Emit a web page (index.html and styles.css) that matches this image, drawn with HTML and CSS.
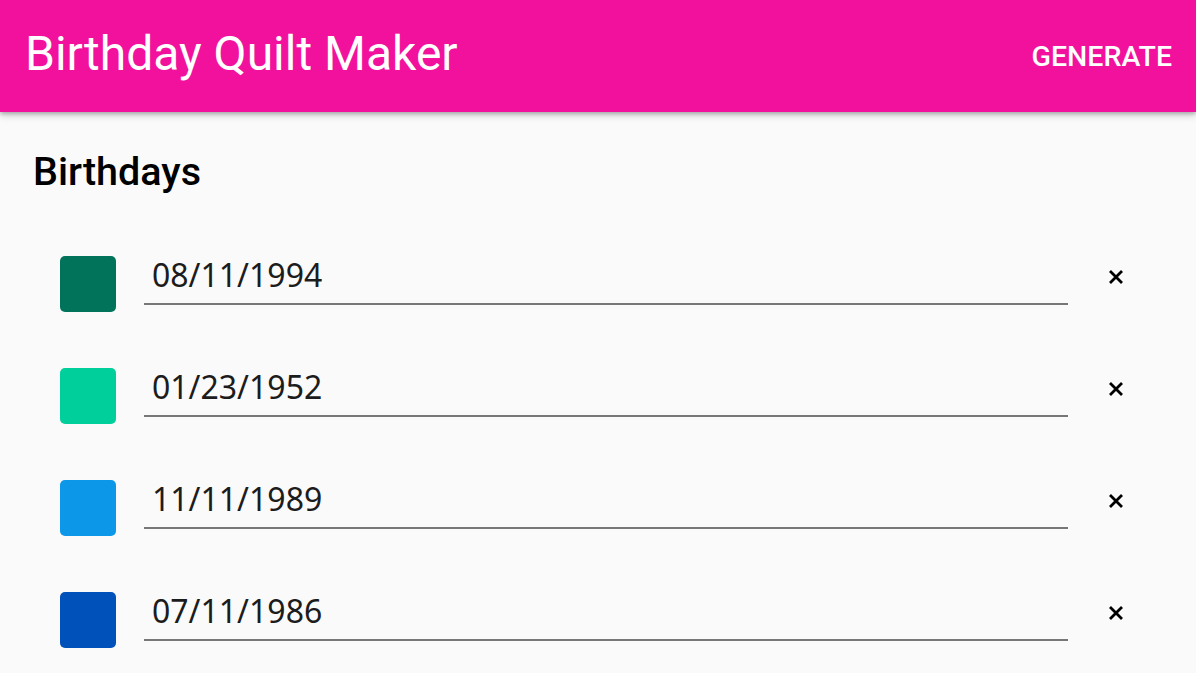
FILE: index.html
```html
<!DOCTYPE html>
<html>
<head>
<meta charset="utf-8">
<link rel="stylesheet" href="styles.css">
</head>
<body>
<header class="appbar">
  <h1 class="title">Birthday Quilt Maker</h1>
  <button class="action">GENERATE</button>
</header>
<main class="content">
  <h2 class="heading">Birthdays</h2>
  <ul class="list">
    <li class="row">
      <span class="swatch c1"></span>
      <div class="field"><span class="value">08/11/1994</span></div>
      <button class="remove"><svg width="16" height="16" viewBox="0 0 16 16"><path d="M2 2 L14 14 M14 2 L2 14" stroke="#000" stroke-width="2.8" fill="none"/></svg></button>
    </li>
    <li class="row">
      <span class="swatch c2"></span>
      <div class="field"><span class="value">01/23/1952</span></div>
      <button class="remove"><svg width="16" height="16" viewBox="0 0 16 16"><path d="M2 2 L14 14 M14 2 L2 14" stroke="#000" stroke-width="2.8" fill="none"/></svg></button>
    </li>
    <li class="row">
      <span class="swatch c3"></span>
      <div class="field"><span class="value">11/11/1989</span></div>
      <button class="remove"><svg width="16" height="16" viewBox="0 0 16 16"><path d="M2 2 L14 14 M14 2 L2 14" stroke="#000" stroke-width="2.8" fill="none"/></svg></button>
    </li>
    <li class="row">
      <span class="swatch c4"></span>
      <div class="field"><span class="value">07/11/1986</span></div>
      <button class="remove"><svg width="16" height="16" viewBox="0 0 16 16"><path d="M2 2 L14 14 M14 2 L2 14" stroke="#000" stroke-width="2.8" fill="none"/></svg></button>
    </li>
  </ul>
</main>
</body>
</html>
```
FILE: styles.css
```css
* { box-sizing: border-box; }
html, body {
  margin: 0;
  padding: 0;
  background: #fafafa;
  font-family: Roboto, "Noto Sans", sans-serif;
  overflow: hidden;
}
.appbar {
  height: 112px;
  background: #f2119c;
  display: flex;
  align-items: center;
  justify-content: space-between;
  padding: 0 24px 6px 25px;
  box-shadow: 0 2px 4px rgba(0,0,0,0.25), 0 4px 8px rgba(0,0,0,0.12);
  position: relative;
  z-index: 1;
}
.title {
  margin: 0;
  color: #fff;
  font-family: Roboto, sans-serif;
  font-weight: 400;
  font-size: 48px;
  letter-spacing: 0;
}
.action {
  background: none;
  border: none;
  color: #fff;
  font-family: Roboto, sans-serif;
  font-weight: 500;
  font-size: 28.5px;
  padding: 0;
  margin-top: 6px;
}
.content {
  padding: 0 0 0 33px;
}
.heading {
  margin: 0;
  padding-top: 36px;
  font-family: Roboto, sans-serif;
  font-weight: 500;
  font-size: 39.5px;
  line-height: 48px;
  color: #000;
}
.list {
  list-style: none;
  margin: 0;
  padding: 60px 0 0 27px;
}
.row {
  display: flex;
  align-items: flex-start;
  height: 112px;
}
.swatch {
  width: 56px;
  height: 56px;
  border-radius: 5px;
  flex: none;
}
.c1 { background: #00735a; }
.c2 { background: #00ce9b; }
.c3 { background: #0c97e8; }
.c4 { background: #0051b9; }
.field {
  margin-left: 28px;
  width: 924px;
  height: 49px;
  border-bottom: 2px solid #777;
  padding: 3px 0 0 8px;
}
.value {
  display: block;
  font-family: "Noto Sans", sans-serif;
  font-size: 32px;
  line-height: 32px;
  color: #1c1c1c;
}
.remove {
  background: none;
  border: none;
  padding: 0;
  margin-left: 40px;
  margin-top: 13px;
  width: 16px;
  height: 16px;
  display: flex;
}
```
